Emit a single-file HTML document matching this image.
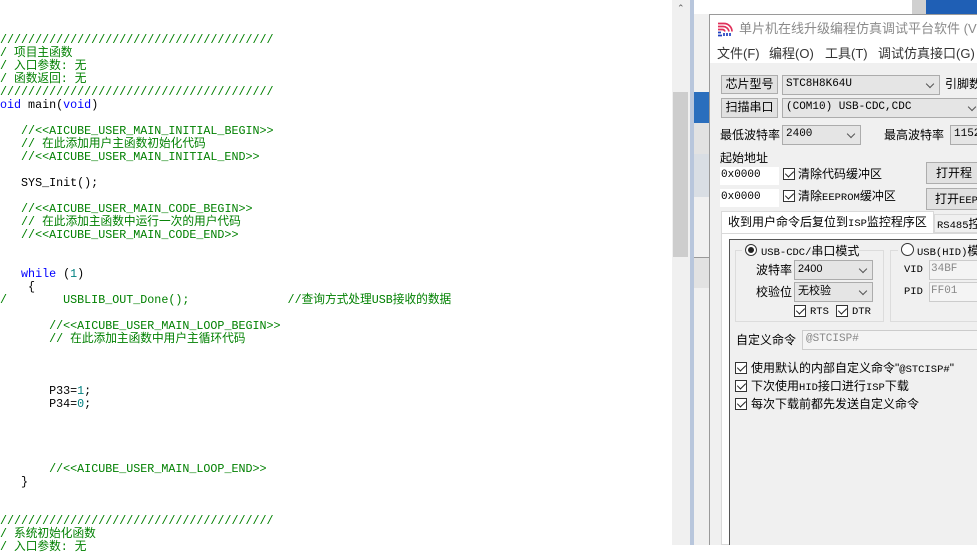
<!DOCTYPE html>
<html><head><meta charset="utf-8"><style>
*{margin:0;padding:0;box-sizing:border-box}
body{width:977px;height:545px;overflow:hidden;background:#fff;position:relative;font-family:"Liberation Sans","Noto Sans CJK SC",sans-serif}
.code{position:absolute;left:0;top:34px;font-family:"Liberation Mono","Noto Sans CJK SC",monospace;font-size:11.7px;line-height:13px;white-space:pre;color:#000}
.g{color:#008000}.b{color:#0000ff}.t{color:#008080}
.a{position:absolute}
.ui{font-size:12px;color:#000;white-space:nowrap;line-height:1}
.btn{position:absolute;background:#e1e1e1;border:1px solid #adadad;font-size:12px;text-align:center;line-height:17px}
.cb{position:absolute;background:#e5e5e5;border:1px solid #acacac;font-family:"Liberation Mono","Noto Sans CJK SC",monospace;font-size:11px;line-height:17px;padding-left:3px;white-space:nowrap;overflow:hidden}
.cb:after{content:"";position:absolute;right:6px;top:5px;width:5px;height:5px;border-right:1px solid #555;border-bottom:1px solid #555;transform:rotate(45deg)}
.in{position:absolute;background:#fff;font-family:"Liberation Mono",monospace;font-size:11px;line-height:17px;padding-left:1px;white-space:nowrap;overflow:hidden}
.ck{position:absolute;width:12px;height:12px;border:1px solid #333;background:#fff}
.ck:after{content:"";position:absolute;left:3px;top:0px;width:4px;height:7px;border-right:1.3px solid #222;border-bottom:1.3px solid #222;transform:rotate(45deg)}
.mono{font-family:"Liberation Mono","Noto Sans CJK SC",monospace;font-size:10.5px}
</style></head><body>
<div class="code"><span class="g">///////////////////////////////////////
/ 项目主函数
/ 入口参数: 无
/ 函数返回: 无
///////////////////////////////////////</span>
<span class="b">oid</span> main(<span class="b">void</span>)

   <span class="g">//&lt;&lt;AICUBE_USER_MAIN_INITIAL_BEGIN&gt;&gt;
   // 在此添加用户主函数初始化代码
   //&lt;&lt;AICUBE_USER_MAIN_INITIAL_END&gt;&gt;</span>

   SYS_Init();

   <span class="g">//&lt;&lt;AICUBE_USER_MAIN_CODE_BEGIN&gt;&gt;
   // 在此添加主函数中运行一次的用户代码
   //&lt;&lt;AICUBE_USER_MAIN_CODE_END&gt;&gt;</span>


   <span class="b">while</span> (<span class="t">1</span>)
    {
<span class="g">/        USBLIB_OUT_Done();              //查询方式处理USB接收的数据</span>

       <span class="g">//&lt;&lt;AICUBE_USER_MAIN_LOOP_BEGIN&gt;&gt;
       // 在此添加主函数中用户主循环代码</span>



       P33=<span class="t">1</span>;
       P34=<span class="t">0</span>;




       <span class="g">//&lt;&lt;AICUBE_USER_MAIN_LOOP_END&gt;&gt;</span>
   }


<span class="g">///////////////////////////////////////
/ 系统初始化函数
/ 入口参数: 无</span></div>

<div class="a" style="left:672px;top:0;width:18px;height:545px;background:#f0f0f0"></div>
<div class="a" style="left:677px;top:3px;font-size:9px;color:#606060">&#8963;</div>
<div class="a" style="left:673px;top:92px;width:15px;height:165px;background:#cdcdcd"></div>
<div class="a" style="left:690px;top:0;width:4px;height:545px;background:#b8c6dc"></div>
<div class="a" style="left:694px;top:0;width:15px;height:545px;background:#f0f0f0"></div>
<div class="a" style="left:694px;top:92px;width:15px;height:31px;background:#2a6ebd"></div>
<div class="a" style="left:694px;top:123px;width:15px;height:31px;background:#e2e2e2"></div>
<div class="a" style="left:694px;top:154px;width:15px;height:43px;background:#d9dee4"></div>
<div class="a" style="left:694px;top:257px;width:15px;height:1px;background:#999"></div>
<div class="a" style="left:694px;top:258px;width:15px;height:30px;background:#e2e2e2"></div>
<div class="a" style="left:694px;top:0;width:218px;height:14px;background:#fff"></div>
<div class="a" style="left:912px;top:0;width:14px;height:14px;background:#d0d0d0"></div>
<div class="a" style="left:926px;top:0;width:51px;height:14px;background:#1f5fb5"></div>

<div class="a" style="left:709px;top:14px;width:268px;height:531px;background:#f0f0f0;border-left:1px solid #9a9a9a;border-top:1px solid #9a9a9a"></div>
<div class="a" style="left:710px;top:15px;width:267px;height:48px;background:#fff"></div>
<svg class="a" style="left:717px;top:21px" width="17" height="16" viewBox="0 0 17 16"><path d="M1 2.5h6a8 8 0 0 1 8 8M1 5.5h5a6 6 0 0 1 6 5M1 8.5h4a3 3 0 0 1 3 2" stroke="#e0305a" stroke-width="1.7" fill="none"/><path d="M1 11.5h3M1 14.5h4M7 15v-3M10 15v-3M13 15v-3" stroke="#2040c0" stroke-width="1.7" fill="none"/></svg>
<div class="a ui" style="left:739px;top:22px;color:#8a8a8a;font-size:13px">单片机在线升级编程仿真调试平台软件 (V6.9</div>
<div class="a ui" style="left:717px;top:47px;color:#333;font-size:13px">文件(F)</div>
<div class="a ui" style="left:769px;top:47px;color:#333;font-size:13px">编程(O)</div>
<div class="a ui" style="left:825px;top:47px;color:#333;font-size:13px">工具(T)</div>
<div class="a ui" style="left:878px;top:47px;color:#333;font-size:13px">调试仿真接口(G)</div>

<div class="btn" style="left:721px;top:75px;width:57px;height:19px">芯片型号</div>
<div class="cb" style="left:782px;top:75px;width:158px;height:20px">STC8H8K64U</div>
<div class="a ui" style="left:945px;top:78px">引脚数</div>
<div class="btn" style="left:721px;top:98px;width:57px;height:20px">扫描串口</div>
<div class="cb" style="left:782px;top:98px;width:200px;height:20px">(COM10) USB-CDC,CDC</div>
<div class="a ui" style="left:720px;top:129px">最低波特率</div>
<div class="cb" style="left:782px;top:125px;width:79px;height:20px">2400</div>
<div class="a ui" style="left:884px;top:129px">最高波特率</div>
<div class="cb" style="left:950px;top:125px;width:40px;height:20px">1152</div>
<div class="a ui" style="left:720px;top:152px">起始地址</div>
<div class="in" style="left:720px;top:167px;width:59px;height:18px">0x0000</div>
<div class="ck" style="left:783px;top:168px"></div>
<div class="a ui" style="left:798px;top:168px">清除代码缓冲区</div>
<div class="btn" style="left:926px;top:162px;width:60px;height:22px;line-height:20px;text-align:left;padding-left:9px">打开程</div>
<div class="in" style="left:720px;top:189px;width:59px;height:18px">0x0000</div>
<div class="ck" style="left:783px;top:190px"></div>
<div class="a ui" style="left:798px;top:190px">清除<span class="mono">EEPROM</span>缓冲区</div>
<div class="btn" style="left:926px;top:188px;width:60px;height:22px;line-height:20px;text-align:left;padding-left:8px">打开<span class="mono">EEP</span></div>

<div class="a" style="left:721px;top:211px;width:213px;height:23px;background:#fff;border:1px solid #d9d9d9;border-bottom:none"></div>
<div class="a ui" style="left:728px;top:216px">收到用户命令后复位到<span class="mono">ISP</span>监控程序区</div>
<div class="a" style="left:934px;top:214px;width:50px;height:19px;border:1px solid #d9d9d9;background:#f0f0f0"></div>
<div class="a ui" style="left:937px;top:218px"><span class="mono">RS485</span>控</div>
<div class="a" style="left:721px;top:233px;width:260px;height:312px;background:#fff;border:1px solid #d9d9d9"></div>
<div class="a" style="left:729px;top:239px;width:250px;height:306px;background:#f0f0f0;border-left:1px solid #555;border-top:1px solid #555"></div>

<div class="a" style="left:735px;top:250px;width:149px;height:72px;border:1px solid #dcdcdc"></div>
<div class="a" style="left:742px;top:243px;width:117px;height:14px;background:#f0f0f0"></div>
<div class="a" style="left:745px;top:244px;width:12px;height:12px;border:1px solid #333;border-radius:50%;background:#fff"></div>
<div class="a" style="left:748px;top:247px;width:6px;height:6px;border-radius:50%;background:#222"></div>
<div class="a ui" style="left:761px;top:245px"><span class="mono">USB-CDC/</span>串口模式</div>
<div class="a ui" style="left:756px;top:264px">波特率</div>
<div class="cb" style="left:794px;top:260px;width:79px;height:20px;font-family:'Liberation Sans'">2400</div>
<div class="a ui" style="left:756px;top:286px">校验位</div>
<div class="cb" style="left:794px;top:282px;width:79px;height:20px;font-family:'Liberation Sans','Noto Sans CJK SC'">无校验</div>
<div class="ck" style="left:794px;top:305px"></div>
<div class="a ui mono" style="left:810px;top:307px">RTS</div>
<div class="ck" style="left:836px;top:305px"></div>
<div class="a ui mono" style="left:852px;top:307px">DTR</div>

<div class="a" style="left:890px;top:250px;width:100px;height:72px;border:1px solid #dcdcdc"></div>
<div class="a" style="left:898px;top:243px;width:90px;height:14px;background:#f0f0f0"></div>
<div class="a" style="left:901px;top:243px;width:13px;height:13px;border:1px solid #333;border-radius:50%;background:#fff"></div>
<div class="a ui" style="left:917px;top:245px"><span class="mono">USB(HID)</span>模</div>
<div class="a ui mono" style="left:904px;top:265px">VID</div>
<div class="in" style="left:929px;top:260px;width:60px;height:20px;color:#888;background:#f4f4f4;border:1px solid #ccc">34BF</div>
<div class="a ui mono" style="left:904px;top:287px">PID</div>
<div class="in" style="left:929px;top:282px;width:60px;height:20px;color:#888;background:#f4f4f4;border:1px solid #ccc">FF01</div>

<div class="a ui" style="left:736px;top:334px">自定义命令</div>
<div class="in" style="left:802px;top:330px;width:180px;height:20px;color:#888;background:#f4f4f4;border:1px solid #ccc;padding-left:3px">@STCISP#</div>
<div class="ck" style="left:735px;top:362px"></div>
<div class="a ui" style="left:751px;top:362px">使用默认的内部自定义命令"<span class="mono">@STCISP#</span>"</div>
<div class="ck" style="left:735px;top:380px"></div>
<div class="a ui" style="left:751px;top:380px">下次使用<span class="mono">HID</span>接口进行<span class="mono">ISP</span>下载</div>
<div class="ck" style="left:735px;top:398px"></div>
<div class="a ui" style="left:751px;top:398px">每次下载前都先发送自定义命令</div>
</body></html>
